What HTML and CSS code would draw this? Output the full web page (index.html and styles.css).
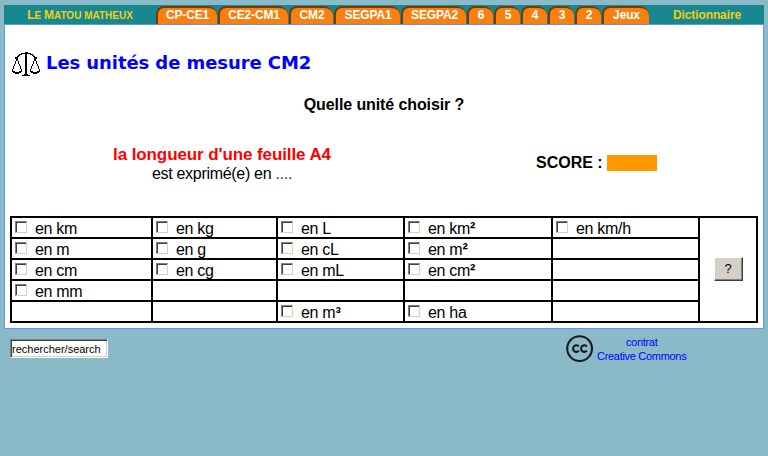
FILE: index.html
```
<!DOCTYPE html>
<html lang="fr">
<head>
<meta charset="utf-8">
<title>Les unités de mesure CM2</title>
<link rel="stylesheet" href="styles.css">
</head>
<body>
<nav class="nav">
  <a class="home"><b>L</b>e <b>M</b>atou matheux</a>
  <div class="tabs">
    <a class="tab w61">CP-CE1</a><a class="tab w70">CE2-CM1</a><a class="tab w44">CM2</a><a class="tab w66">SEGPA1</a><a class="tab w65">SEGPA2</a><a class="tab">6</a><a class="tab">5</a><a class="tab">4</a><a class="tab">3</a><a class="tab">2</a><a class="tab w47">Jeux</a>
  </div>
  <a class="dico">Dictionnaire</a>
</nav>
<main class="panel">
  <header class="title">
    <svg class="scales" width="28" height="25" viewBox="0 0 28 25" fill="none" stroke="#000" shape-rendering="crispEdges">
      <path d="M14 0v23" stroke-width="2"/>
      <path d="M10 23.5h8M12 22.5h4M13 .5h3"/>
      <path d="M9 1.5h10M7 2.5h3M18 2.5h3M6 3.5h2M20 3.5h2M5 4.5h2M21 4.5h2M3 5.5h3M22 5.5h3M3 6.5h3M22 6.5h3"/>
      <path d="M4.5 7v2M3.5 9v3M2.5 12v2M1.5 14v3M.5 17v3M5.5 7v2M6.5 9v3M7.5 12v2M8.5 14v3M9.5 17v3"/>
      <path d="M23.5 7v2M24.5 9v3M25.5 12v2M26.5 14v3M27.5 17v3M22.5 7v2M21.5 9v3M20.5 12v2M19.5 14v3M18.5 17v3"/>
      <path d="M1 19.5h2M7 19.5h2M19 19.5h2M25 19.5h2M1 20.5h8M19 20.5h8M3 21.5h4M21 21.5h4"/>
    </svg>
    <h1>Les unités de mesure CM2</h1>
  </header>
  <h2>Quelle unité choisir ?</h2>
  <section class="question">
    <div class="prompt"><strong>la longueur d'une feuille A4</strong><span>est exprimé(e) en <i>....</i></span></div>
    <div class="score"><b>SCORE :</b><span class="bar"></span></div>
  </section>
  <section class="grid">
    <label><i class="box"></i>en km</label><label><i class="box"></i>en kg</label><label><i class="box"></i>en L</label><label><i class="box"></i>en km<b>²</b></label><label><i class="box"></i>en km/h</label>
    <div class="help"><button>?</button></div>
    <label><i class="box"></i>en m</label><label><i class="box"></i>en g</label><label><i class="box"></i>en cL</label><label><i class="box"></i>en m<b>²</b></label><label></label>
    <label><i class="box"></i>en cm</label><label><i class="box"></i>en cg</label><label><i class="box"></i>en mL</label><label><i class="box"></i>en cm<b>²</b></label><label></label>
    <label><i class="box"></i>en mm</label><label></label><label></label><label></label><label></label>
    <label></label><label></label><label><i class="box"></i>en m<b>³</b></label><label><i class="box"></i>en ha</label><label></label>
  </section>
</main>
<footer class="footer">
  <div class="search">rechercher/search</div>
  <div class="license">
    <svg width="28" height="28" viewBox="0 0 28 28" fill="none" stroke="#1a1a1a">
      <circle cx="13.6" cy="13.6" r="12.4" stroke-width="2.1"/>
      <path d="M12.9 11.5A3.3 3.3 0 1 0 12.9 15.7M20.9 11.5A3.3 3.3 0 1 0 20.9 15.7" stroke-width="2.1"/>
    </svg>
    <a>contrat<br>Creative Commons</a>
  </div>
</footer>
</body>
</html>
```
FILE: styles.css
```
* { box-sizing: border-box; }
body {
  margin: 0;
  padding: 5px 4px 0;
  background: #8abac8;
  font-family: "Liberation Sans", Arial, sans-serif;
  font-size: 16px;
  color: #000;
}
.nav {
  display: flex;
  width: 760px;
  height: 19px;
  background: #188890;
  font-size: 12px;
  font-weight: bold;
  line-height: 19px;
  color: #f0d010;
}
.home { width: 152px; text-align: center; text-transform: uppercase; font-size: 10px; line-height: 20px; white-space: nowrap; }
.home b { font-size: 12px; }
.tabs { display: flex; gap: 1px; padding-top: 1px; width: 494px; }
.tab {
  width: 26px;
  height: 18px;
  border-top: 2px solid #783800;
  border-left: 2px solid #783800;
  border-radius: 8px 9px 0 0;
  background: #f88010;
  color: #fff;
  line-height: 14px;
  text-align: center;
  letter-spacing: -0.15px;
  white-space: nowrap;
}
.w61 { width: 61px; }
.w70 { width: 70px; }
.w44 { width: 44px; }
.w66 { width: 66px; }
.w65 { width: 65px; }
.w47 { width: 47px; }
.dico { width: 114px; text-align: center; line-height: 20px; letter-spacing: -0.1px; }
.panel {
  width: 760px;
  height: 305px;
  border: 1px solid #6495ed;
  background: #fff;
  padding: 0 5px;
}
.title { display: flex; height: 52px; padding: 27px 0 0 2px; }
.scales { flex: none; margin-right: 6px; }
h1 { margin: -1px 0 0; font: bold 18px/24px "DejaVu Sans", Verdana, sans-serif; letter-spacing: -0.08px; color: #00f; white-space: nowrap; }
h2 { margin: 19px 0 0; font-size: 16px; line-height: 18px; letter-spacing: -0.1px; text-align: center; }
.question { display: flex; height: 101px; padding-top: 31px; }
.prompt { width: 424px; text-align: center; line-height: 19px; }
.prompt strong { display: block; color: #f00; font-size: 17px; letter-spacing: -0.1px; }
.prompt i { color: #244; font-style: normal; }
.prompt span { display: block; letter-spacing: -0.3px; }
.score { display: flex; align-items: center; height: 36px; margin-left: 102px; gap: 4px; }
.bar { width: 50px; height: 16px; background: #f90; }
.grid {
  display: grid;
  grid-template-columns: 139px 123px 125px 146px 145px 56px;
  grid-template-rows: repeat(5, 19px);
  gap: 2px;
  padding: 2px;
  width: 748px;
  margin-top: 1px;
  background: #000;
}
.grid label { display: flex; background: #fff; padding-left: 3px; line-height: 21px; letter-spacing: -0.3px; white-space: nowrap; }
.box {
  width: 12px;
  height: 12px;
  margin: 3px 8px 0 0;
  border: 1px solid;
  border-color: #808080 #d4d0c8 #d4d0c8 #808080;
  box-shadow: inset 1px 1px #404040;
}
.help { grid-column: 6; grid-row: 1 / 6; display: flex; align-items: center; justify-content: center; background: #fff; }
.help button {
  width: 29px;
  height: 24px;
  margin-bottom: 2px;
  padding: 0;
  border: 1px solid;
  border-color: #fff #404040 #404040 #fff;
  box-shadow: inset -1px -1px #808080;
  background: #d4d0c8;
  font: 13px "Liberation Sans", Arial, sans-serif;
}
.footer { display: flex; padding: 5px 0 0 6px; }
.search {
  width: 98px;
  height: 19px;
  margin-top: 5px;
  padding-left: 1px;
  border: 1px solid;
  border-color: #808080 #fff #fff #808080;
  box-shadow: inset 1px 1px #404040, inset -1px -1px #d4d0c8;
  background: #fff;
  font-size: 11px;
  line-height: 18px;
}
.license { display: flex; margin-left: 458px; gap: 3px; }
.license svg { margin-top: 1px; }
.license a { color: #00f; font-size: 11px; line-height: 14px; letter-spacing: -0.3px; text-align: center; padding-top: 1px; white-space: nowrap; }
```
